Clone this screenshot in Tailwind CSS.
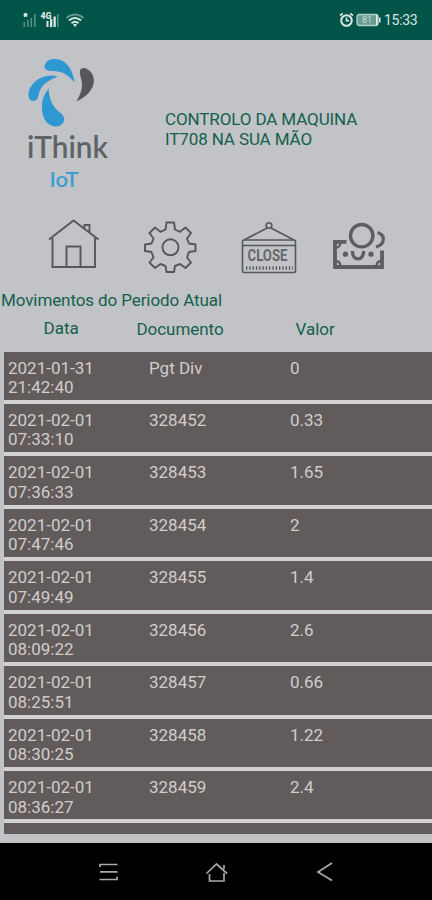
<!DOCTYPE html>
<html lang="pt">
<head>
    <meta charset="UTF-8">
    <meta name="viewport" content="width=device-width, initial-scale=1.0">
    <title>iThink IoT</title>
    <script src="https://cdn.jsdelivr.net/npm/@tailwindcss/browser@4"></script>
</head>
<body class="flex h-[900px] w-[432px] flex-col overflow-hidden bg-[#c1c3c7] font-[Roboto,sans-serif] text-[17px] leading-[19.5px] text-[#14604c]">
    <!-- Status bar -->
    <header class="flex h-10 shrink-0 items-center justify-between bg-[#005548] pr-[14px] pl-[22px] text-[#dbe7e4]">
        <svg class="h-5 w-[64px]" viewBox="0 0 64 20" fill="currentColor">
            <path d="M2 3.500l3 3M5 3.500l-3 3" stroke="currentColor" stroke-width="1.8" />
            <g opacity=".4">
                <path d="M1.500 12h1.600v5H1.500zM5 10h1.600v7H5zM8.500 8h1.600v9H8.500zM12 4h1.600v13H12z" />
            </g>
            <text x="18.500" y="8.800" font-size="9" font-weight="900" textLength="11" lengthAdjust="spacingAndGlyphs">4G</text>
            <path d="M24.500 11h2v6h-2zM28 9h2.300v8H28zM31.500 6.500h2.300V17h-2.300z" />
            <path d="M35 4h1.600v13H35z" opacity=".4" />
            <g fill="none" stroke="currentColor" stroke-width="2">
                <path d="M44.500 8q8.500-7 17 0" opacity=".45" />
                <path d="M47 10.500q6-5 12 0M49.500 13.200q3.500-3 7 0" />
            </g>
            <path d="M51 14.500q2-1.300 4 0l-2 2.500z" />
        </svg>
        <div class="flex items-center">
            <svg class="h-4 w-[15px]" viewBox="0 0 15 16" fill="none" stroke="currentColor" stroke-width="2">
                <circle cx="7.500" cy="8.500" r="5.300" />
                <path d="M7.500 5.500v3.200h2.700M1 3.500l2.700-2M14 3.500l-2.700-2" stroke-width="1.600" />
            </svg>
            <svg class="ml-[2px] h-[14px] w-[25px]" viewBox="0 0 25 14">
                <rect x="1" y="1.500" width="21" height="11" rx="2" fill="#699d92" stroke="#b9d1cb" stroke-width="1.300" />
                <path d="M20 2h1.500v10H20zM23 4.500h1.500v5H23z" fill="#e3eeeb" />
                <text x="6" y="10.300" font-size="9" fill="#c8dcd7">81</text>
            </svg>
            <span class="mt-[2px] ml-[3px] w-[34px] text-[14px] tracking-[-0.3px] whitespace-nowrap">15:33</span>
        </div>
    </header>

    <!-- Brand -->
    <section class="flex h-[170px] shrink-0">
        <svg class="h-[160px] w-[125px]" viewBox="0 40 125 160">
            <g fill="#2f98d2">
                <path d="M44.500 66.500C45.500 61 50 58.800 55 59C61 59 66 62.500 69 67C72.500 72 73.500 76.500 74.700 82.500C69.500 77 67 74.500 62 72.500C56 70.500 51 72 47 70C45 69 44.200 68 44.500 66.500Z" />
                <path d="M58 76.500C51 74.500 44 75.500 38.500 79C31.500 83.500 28 90 28.500 95.500C29 100.500 32.500 102 35.500 100.500C39 98.500 38 94.500 40 90.500C43 83.500 50 79.500 58 76.500Z" />
                <path d="M48.700 88.500C43.500 95 41.500 101 42 109C42.500 118 46.500 125.500 55 126.500C61.500 127 65 122 64 118C63 113 57.500 112 54 106.500C50.500 101 49 96 48.700 88.500Z" />
            </g>
            <path d="M80 71C80.500 67.500 84 67.500 87 69C92.500 72 95 78 93.500 84C91.500 92 84 98 76.300 101.500C79.500 96 82 91 82 85.500C82.200 79.500 79.500 76 80 71Z" fill="#555759" />
            <text x="27" y="158" textLength="81" lengthAdjust="spacingAndGlyphs" font-family="Lato, sans-serif" font-weight="600" font-size="31" fill="#606266">iThink</text>
            <text x="49.500" y="186.500" textLength="29" lengthAdjust="spacingAndGlyphs" font-family="Lato, sans-serif" font-weight="600" font-size="21" fill="#3d9dd0">IoT</text>
        </svg>
        <h1 class="mt-[70px] ml-10 w-[215px] tracking-[-0.12px]">CONTROLO DA MAQUINA<br>IT708 NA SUA MÃO</h1>
    </section>

    <!-- Shortcuts -->
    <nav class="h-[78px] shrink-0">
        <svg class="h-[70px] w-[432px]" viewBox="0 210 432 70" fill="none" stroke="#55575a" stroke-width="1.900">
            <path d="M49 239.500L73.500 220.500L98.500 239.500M52.500 238v29h42.500v-29M66.500 267v-20.500h14V267M84.500 228v-3h5v7.500" />
            <path d="M166.500 222.500H174L175 229.500L180 231.800L185.500 227.500L191 233L187 238.500L189 243.500L195.500 244.500V251L189 252L187 257.500L191 262.500L185.500 268L180 264L175 266L174 272H166.500L165.500 266L160.500 264L155 268L149.500 262.500L153.500 257.500L151.500 252L145 251V244.500L151.500 243.500L153.500 238.500L149.500 233L155 227.500L160.500 231.800L165.500 229.500Z" stroke-linejoin="round" />
            <circle cx="170.500" cy="247.300" r="8" />
            <!-- hanging sign -->
            <g stroke-width="1.600">
                <circle cx="269" cy="225.500" r="2.800" />
                <path d="M267 228L244 240M271 228L294 240" />
                <rect x="242.500" y="240" width="53" height="32.500" rx="1.500" />
                <path d="M242.500 245.500h53" />
                <path d="M246 268h47" stroke-width="3.500" stroke-dasharray="1.3 2" />
            </g>
            <text x="247.500" y="261" font-size="16" font-weight="700" textLength="40" lengthAdjust="spacingAndGlyphs" fill="#66686c" stroke="none">CLOSE</text>
            <!-- cash -->
            <g stroke="#5c5e61">
                <circle cx="361.700" cy="235.700" r="11.200" stroke-width="3.400" />
                <path d="M377.500 232.500C385.500 235 385.500 244 376 247" stroke-width="3.200" />
                <path d="M346.500 241.800H335V267H382V250.500" stroke-width="3.800" />
                <path d="M336 247.500q4 0 4.500-5M336 261q4 0 4.500 5M381 261q-4 0-4.500 5" stroke-width="2.500" />
                <path d="M352.500 251C352 261.500 364 261.500 363.500 251" stroke-width="3.300" />
            </g>
            <g fill="#5c5e61" stroke="none">
                <circle cx="345.500" cy="254.200" r="2.600" />
                <circle cx="371" cy="254.200" r="2.600" />
            </g>
        </svg>
    </nav>

    <!-- Movements -->
    <h2 class="mt-[3px] ml-px h-5 shrink-0 tracking-[-0.1px]">Movimentos do Periodo Atual</h2>
    <div class="mt-2 flex h-[32.5px] shrink-0">
        <span class="box-content w-[93px] shrink-0 pl-[43.5px]">Data</span>
        <span class="mt-px w-[159px] shrink-0 tracking-[-0.05px]">Documento</span>
        <span class="mt-px">Valor</span>
    </div>
    <ul id="movements" class="ml-1 flex h-[482px] shrink-0 flex-col gap-[4px] overflow-hidden bg-[#d3d2d3] text-[#d1cdcd]"></ul>

    <!-- Navigation bar -->
    <footer class="mt-auto h-[57px] shrink-0 bg-black">
        <svg class="h-[57px] w-[432px]" viewBox="0 843 432 57" fill="none" stroke="#a9a9a9" stroke-width="1.700">
            <path d="M100 867v-2.500h17.500M100 871.800h17.500M99.500 879.500h17.500v-2.800" />
            <path d="M206.500 873.500L216.500 864L227 873.500M209.500 874v7h14.500v-8M224 865v4" />
            <path d="M332 863L318 872L332 880.500" />
        </svg>
    </footer>

    <script>
        const movements = [
            ['2021-01-31', '21:42:40', 'Pgt Div', '0'],
            ['2021-02-01', '07:33:10', '328452', '0.33'],
            ['2021-02-01', '07:36:33', '328453', '1.65'],
            ['2021-02-01', '07:47:46', '328454', '2'],
            ['2021-02-01', '07:49:49', '328455', '1.4'],
            ['2021-02-01', '08:09:22', '328456', '2.6'],
            ['2021-02-01', '08:25:51', '328457', '0.66'],
            ['2021-02-01', '08:30:25', '328458', '1.22'],
            ['2021-02-01', '08:36:27', '328459', '2.4'],
            ['', '', '', '']
        ];

        document.getElementById('movements').innerHTML = movements.map(([date, time, doc, value]) => `
            <li class="flex h-[48.45px] shrink-0 bg-[#615b5b] pt-[7px] pl-1">
                <span class="w-[141px]">${date}<br>${time}</span>
                <span class="w-[141px]">${doc}</span>
                <span>${value}</span>
            </li>
        `).join('');
    </script>
</body>
</html>
